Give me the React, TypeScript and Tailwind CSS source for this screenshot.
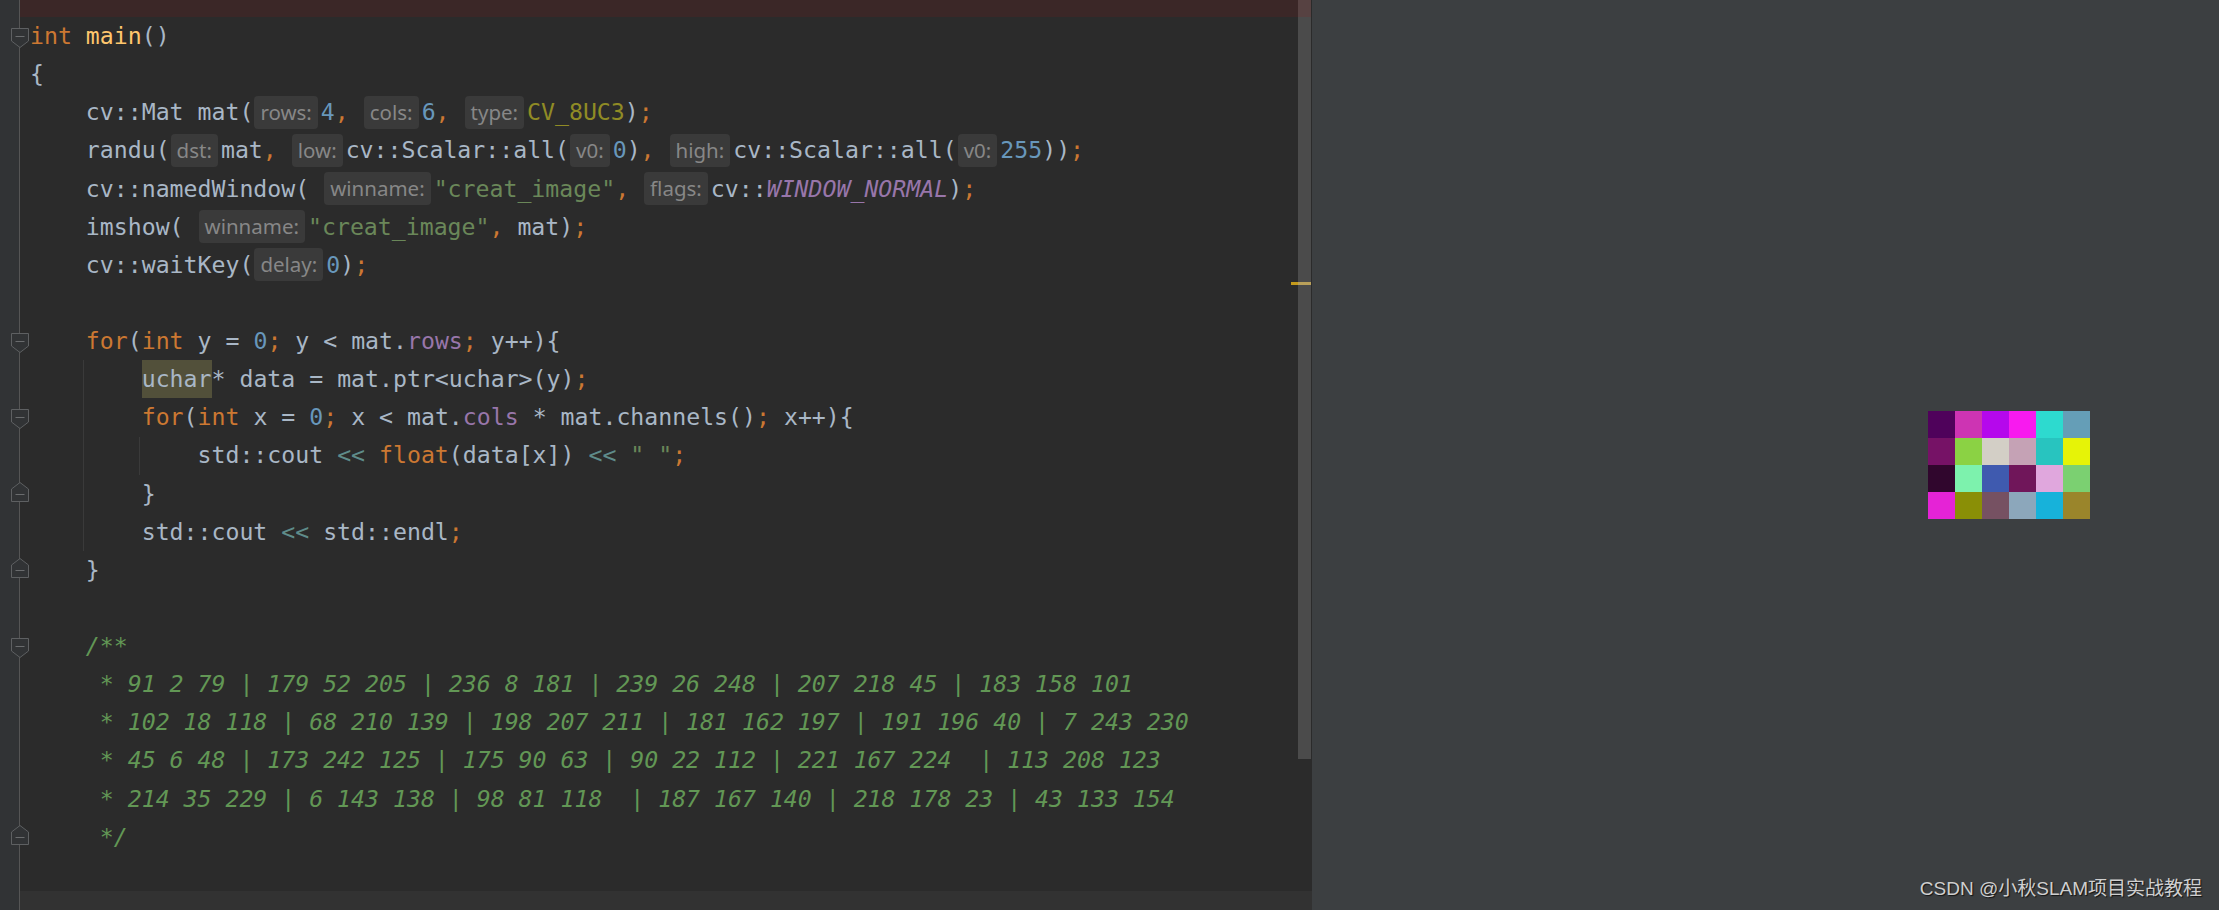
import React from "react";

const d = (t: string) => <span className="text-[#a9b7c6]">{t}</span>;
const o = (t: string) => <span className="text-[#cc7832]">{t}</span>;
const k = (t: string) => <span className="text-[#cc7832]">{t}</span>;
const n = (t: string) => <span className="text-[#6897bb]">{t}</span>;
const s = (t: string) => <span className="text-[#6a8759]">{t}</span>;
const p = (t: string) => <span className="text-[#9876aa]">{t}</span>;
const pi = (t: string) => <span className="text-[#9876aa] italic">{t}</span>;
const m = (t: string) => <span className="text-[#908b25]">{t}</span>;
const fn = (t: string) => <span className="text-[#ffc66d]">{t}</span>;
const op = (t: string) => <span className="text-[#5f8c8a]">{t}</span>;
const c = (t: string) => <span className="text-[#629755] italic">{t}</span>;
const h = (t: string) => (
  <span className="ml-[1px] mr-[3px] h-[33px] leading-[33px] px-[6px] rounded-[4px] bg-[#3a3a3a] text-[#878787] font-['Noto_Sans',sans-serif] text-[20.5px] not-italic">
    {t}
  </span>
);

function Line({ children }: { children?: React.ReactNode }) {
  return (
    <div className="flex items-center h-[38.14px] leading-[38.14px] whitespace-pre">
      {children}
    </div>
  );
}

function FoldStart() {
  return (
    <svg width="18" height="20" viewBox="0 0 18 20" className="block ml-[10.5px] mt-[11px]">
      <path d="M0.5 0.5 H17.5 V13 L9 19.5 L0.5 13 Z" fill="#313335" stroke="#5e6062" strokeWidth="1" />
      <path d="M4.5 8.5 H13.5" stroke="#6a6c6e" strokeWidth="1" />
    </svg>
  );
}

function FoldEnd() {
  return (
    <svg width="18" height="20" viewBox="0 0 18 20" className="block ml-[10.5px] mt-[7px]">
      <path d="M0.5 19.5 H17.5 V7 L9 0.5 L0.5 7 Z" fill="#313335" stroke="#5e6062" strokeWidth="1" />
      <path d="M4.5 12.5 H13.5" stroke="#6a6c6e" strokeWidth="1" />
    </svg>
  );
}

const folds: Record<number, "s" | "e"> = {
  1: "s",
  9: "s",
  11: "s",
  13: "e",
  15: "e",
  17: "s",
  22: "e",
};

const grid = [
  ["bg-[rgb(79,2,91)]", "bg-[rgb(205,52,179)]", "bg-[rgb(181,8,236)]", "bg-[rgb(248,26,239)]", "bg-[rgb(45,218,207)]", "bg-[rgb(101,158,183)]"],
  ["bg-[rgb(118,18,102)]", "bg-[rgb(139,210,68)]", "bg-[rgb(211,207,198)]", "bg-[rgb(197,162,181)]", "bg-[rgb(40,196,191)]", "bg-[rgb(230,243,7)]"],
  ["bg-[rgb(48,6,45)]", "bg-[rgb(125,242,173)]", "bg-[rgb(63,90,175)]", "bg-[rgb(112,22,90)]", "bg-[rgb(224,167,221)]", "bg-[rgb(123,208,113)]"],
  ["bg-[rgb(229,35,214)]", "bg-[rgb(138,143,6)]", "bg-[rgb(118,81,98)]", "bg-[rgb(140,167,187)]", "bg-[rgb(23,178,218)]", "bg-[rgb(154,133,43)]"],
];

export default function App() {
  const rows = Array.from({ length: 22 }, (_, i) => i + 1);
  return (
    <div className="flex w-[2219px] h-[910px] overflow-hidden">
      {/* Editor */}
      <div className="flex flex-col w-[1312px] bg-[#2b2b2b]">
        <div className="flex h-[891px]">
          {/* Gutter */}
          <div className="w-[20px] shrink-0 bg-[#313335] border-r border-[#555555] flex flex-col pt-[17px]">
            {rows.map((r) => (
              <div key={r} className="h-[38.14px] shrink-0">
                {folds[r] === "s" ? <FoldStart /> : folds[r] === "e" ? <FoldEnd /> : null}
              </div>
            ))}
          </div>
          {/* Code */}
          <div className="flex-1 min-w-0 flex flex-col overflow-hidden">
            <div className="h-[17px] shrink-0 bg-[#3b2727]" />
            <div className="relative pl-[10px] font-['DejaVu_Sans_Mono',monospace] text-[23.2px] text-[#a9b7c6]">
              <div className="absolute left-[63px] top-[343.3px] w-px h-[190.7px] bg-[#3a3a3a]" />
              <div className="absolute left-[119px] top-[419.5px] w-px h-[38.14px] bg-[#3a3a3a]" />
              <Line>{k("int")}{d(" ")}{fn("main")}{d("()")}</Line>
              <Line>{d("{")}</Line>
              <Line>
                {d("    cv::Mat mat(")}{h("rows:")}{n("4")}{o(",")}{d(" ")}{h("cols:")}{n("6")}{o(",")}{d(" ")}{h("type:")}{m("CV_8UC3")}{d(")")}{o(";")}
              </Line>
              <Line>
                {d("    randu(")}{h("dst:")}{d("mat")}{o(",")}{d(" ")}{h("low:")}{d("cv::Scalar::all(")}{h("v0:")}{n("0")}{d(")")}{o(",")}{d(" ")}{h("high:")}{d("cv::Scalar::all(")}{h("v0:")}{n("255")}{d("))")}{o(";")}
              </Line>
              <Line>
                {d("    cv::namedWindow( ")}{h("winname:")}{s("\"creat_image\"")}{o(",")}{d(" ")}{h("flags:")}{d("cv::")}{pi("WINDOW_NORMAL")}{d(")")}{o(";")}
              </Line>
              <Line>
                {d("    imshow( ")}{h("winname:")}{s("\"creat_image\"")}{o(",")}{d(" mat)")}{o(";")}
              </Line>
              <Line>
                {d("    cv::waitKey(")}{h("delay:")}{n("0")}{d(")")}{o(";")}
              </Line>
              <Line />
              <Line>
                {d("    ")}{k("for")}{d("(")}{k("int")}{d(" y = ")}{n("0")}{o(";")}{d(" y < mat.")}{p("rows")}{o(";")}{d(" y++){")}
              </Line>
              <Line>
                {d("        ")}<span className="bg-[#52503a] text-[#a9b7c6]">uchar</span>{d("* data = mat.ptr<uchar>(y)")}{o(";")}
              </Line>
              <Line>
                {d("        ")}{k("for")}{d("(")}{k("int")}{d(" x = ")}{n("0")}{o(";")}{d(" x < mat.")}{p("cols")}{d(" * mat.channels()")}{o(";")}{d(" x++){")}
              </Line>
              <Line>
                {d("            std::cout ")}{op("<<")}{d(" ")}{k("float")}{d("(data[x]) ")}{op("<<")}{d(" ")}{s("\" \"")}{o(";")}
              </Line>
              <Line>{d("        }")}</Line>
              <Line>
                {d("        std::cout ")}{op("<<")}{d(" std::endl")}{o(";")}
              </Line>
              <Line>{d("    }")}</Line>
              <Line />
              <Line>{c("    /**")}</Line>
              <Line>{c("     * 91 2 79 | 179 52 205 | 236 8 181 | 239 26 248 | 207 218 45 | 183 158 101")}</Line>
              <Line>{c("     * 102 18 118 | 68 210 139 | 198 207 211 | 181 162 197 | 191 196 40 | 7 243 230")}</Line>
              <Line>{c("     * 45 6 48 | 173 242 125 | 175 90 63 | 90 22 112 | 221 167 224  | 113 208 123")}</Line>
              <Line>{c("     * 214 35 229 | 6 143 138 | 98 81 118  | 187 167 140 | 218 178 23 | 43 133 154")}</Line>
              <Line>{c("     */")}</Line>
            </div>
          </div>
          {/* Scrollbar */}
          <div className="w-[14px] shrink-0 flex flex-col">
            <div className="h-[17px] w-[13px] bg-[#574242]" />
            <div className="relative h-[742px] w-[13px] bg-[#4b4b4b]">
              <div className="absolute top-[265px] -left-[7px] flex h-[3px]">
                <div className="w-[7px] bg-[#c49a1c]" />
                <div className="w-[13px] bg-[#b9a05a]" />
              </div>
            </div>
          </div>
        </div>
        <div className="flex h-[19px] bg-[#323232]">
          <div className="w-[20px] bg-[#313335] border-r border-[#555555]" />
        </div>
      </div>
      {/* Image window */}
      <div className="flex-1 flex flex-col bg-[#3c3f41]">
        <div className="mt-[411px] ml-[616px] grid grid-cols-6 w-[162px]">
          {grid.flat().map((cls, i) => (
            <div key={i} className={`h-[27px] w-[27px] ${cls}`} />
          ))}
        </div>
        <div className="mt-auto self-end pr-[17px] pb-[10px] text-[19px] leading-[22px] text-[#cfcfcf] font-['Liberation_Sans','Noto_Sans_CJK_SC',sans-serif] [text-shadow:1px_1px_1px_rgba(0,0,0,0.7)]">
          CSDN @小秋SLAM项目实战教程
        </div>
      </div>
    </div>
  );
}
